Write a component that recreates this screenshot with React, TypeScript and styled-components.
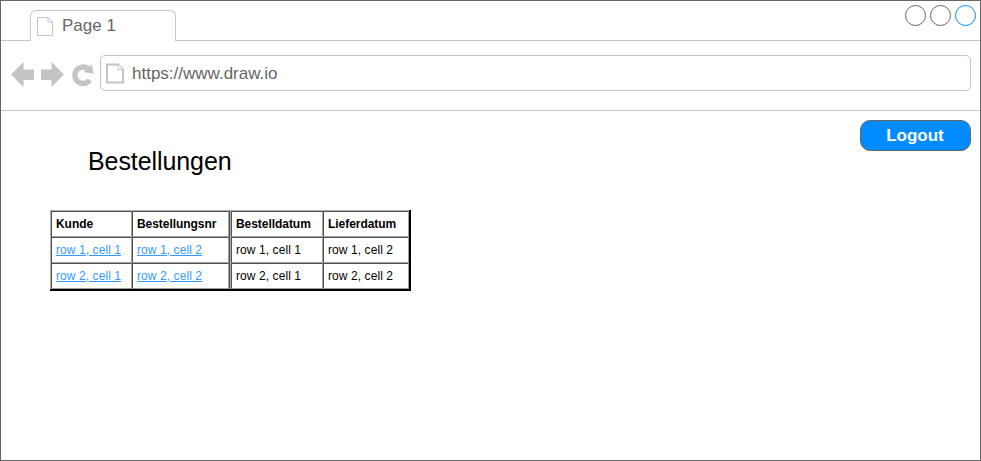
import React from "react";
import styled, { createGlobalStyle } from "styled-components";

const Global = createGlobalStyle`
  *, *::before, *::after { box-sizing: border-box; }
  body { margin: 0; background: #fff; font-family: "Liberation Sans", Arial, sans-serif; }
`;

const Window = styled.div`
  width: 981px;
  height: 461px;
  border: 1px solid #666;
  display: flex;
  flex-direction: column;
  overflow: hidden;
`;

const TabBar = styled.header`
  height: 40px;
  border-bottom: 1px solid #c4c4c4;
  display: flex;
  justify-content: space-between;
  padding: 4px 4px 0 29px;
  flex: none;
`;

const Tab = styled.div`
  width: 146px;
  height: 31px;
  margin: 5px 0 0;
  border: 1px solid #c4c4c4;
  border-bottom: none;
  border-radius: 6px 6px 0 0;
  background: #fff;
  display: flex;
  align-items: flex-start;
  padding: 6px 0 0 6px;
  gap: 6px;
  color: #666;
  font-size: 17px;
  line-height: 18px;
`;

const Circles = styled.div`
  display: flex;
  gap: 3px;
`;

const Circle = styled.svg<{ $color: string }>`
  width: 22px;
  height: 22px;
  fill: #fff;
  stroke: ${(p) => p.$color};
`;

const Toolbar = styled.div`
  height: 70px;
  border-bottom: 1px solid #c4c4c4;
  display: flex;
  align-items: flex-start;
  padding: 14px 9px 0 9px;
  flex: none;
`;

const NavIcons = styled.svg`
  width: 90px;
  height: 36px;
  flex: none;
`;

const AddressBar = styled.div`
  flex: 1;
  height: 36px;
  border: 1px solid #c4c4c4;
  border-radius: 5px;
  display: flex;
  align-items: center;
  padding-left: 5px;
  gap: 7px;
  color: #666;
  font-size: 17px;
  line-height: 20px;
`;

const Address = styled.span`
  padding-top: 2px;
`;

const FileIcon = styled.svg`
  width: 19px;
  height: 21px;
  flex: none;
  fill: #fff;
  stroke: #c4c4c4;
`;

const Content = styled.main`
  flex: 1;
  display: flex;
  justify-content: space-between;
  align-items: flex-start;
  padding: 9px 9px 0 49px;
`;

const Title = styled.h1`
  margin: 26px 0 0 38px;
  font-size: 25px;
  line-height: 30px;
  letter-spacing: -0.08px;
  font-weight: 400;
  color: #000;
`;

const Logout = styled.button`
  width: 111px;
  height: 31px;
  padding: 0 1px 0 0;
  border: 1px solid #666;
  border-radius: 10px;
  background: #008cff;
  color: #fff;
  font: bold 17px/29px "Liberation Sans", Arial, sans-serif;
`;

const Tables = styled.div`
  display: flex;
  width: 361px;
  margin-top: 34px;
  border-right: 2px solid #000;
  border-bottom: 2px solid #000;
`;

const Table = styled.table<{ $divider?: boolean }>`
  border-collapse: separate;
  border-spacing: 0;
  table-layout: fixed;
  border-top: 1px solid #b0b0b0;
  border-left: 1px solid #b0b0b0;
  border-right: ${(p) => (p.$divider ? "1px solid #505050" : "none")};
  font-size: 12px;
  line-height: 14px;
  color: #000;
`;

const Cell = styled.td<{ $width: number }>`
  width: ${(p) => p.$width}px;
  height: 26px;
  padding: 0 0 0 4px;
  border: 1px solid;
  border-color: #505050 #a0a0a0 #a0a0a0 #505050;
  text-align: left;
  white-space: nowrap;
  letter-spacing: 0.08px;
`;

const HeadCell = styled(Cell)`
  letter-spacing: -0.05px;
`;

const Link = styled.a`
  color: #3399ff;
  text-decoration: underline;
`;

type GridProps = { heads: string[]; widths: number[]; linked?: boolean };

function OrderTable({ heads, widths, linked }: GridProps) {
  return (
    <Table $divider={linked}>
      <thead>
        <tr>
          {heads.map((h, i) => (
            <HeadCell as="th" key={h} $width={widths[i]}>{h}</HeadCell>
          ))}
        </tr>
      </thead>
      <tbody>
        {[1, 2].map((r) => (
          <tr key={r}>
            {[1, 2].map((c) => {
              const text = `row ${r}, cell ${c}`;
              return (
                <Cell key={c} $width={widths[c - 1]}>
                  {linked ? <Link>{text}</Link> : text}
                </Cell>
              );
            })}
          </tr>
        ))}
      </tbody>
    </Table>
  );
}

export default function App() {
  return (
    <>
      <Global />
      <Window>
        <TabBar>
          <Tab>
            <FileIcon viewBox="0 0 19 21">
              <path d="M.5 .5H11L15.5 5V18.5H.5ZM11 .5V5H15.5" />
            </FileIcon>
            <span>Page 1</span>
          </Tab>
          <Circles>
            {["#666", "#666", "#008cff"].map((c, i) => (
              <Circle key={i} $color={c} viewBox="0 0 22 22">
                <circle cx="11.5" cy="10.5" r="10" />
              </Circle>
            ))}
          </Circles>
        </TabBar>
        <Toolbar>
          <NavIcons viewBox="10 55 90 36" fill="#c4c4c4">
            <path d="M11 74.5L23.5 62V69.5H34V80H23.5V87Z" />
            <path d="M64 74.5L51.5 62V69.5H41V80H51.5V87Z" />
            <path
              d="M88.3 68.9A8.2 8.2 0 1 0 89.8 80"
              fill="none"
              stroke="#c4c4c4"
              strokeWidth="5.4"
            />
            <path d="M91.5 64.5L93.8 73.8L83.5 72Z" />
          </NavIcons>
          <AddressBar>
            <FileIcon viewBox="0 0 19 21" strokeWidth="2">
              <path d="M1 1.5H12L17 6.5V19.5H1Z" />
              <path d="M12 1.5V6.5H17" strokeWidth="1" />
            </FileIcon>
            <Address>https://www.draw.io</Address>
          </AddressBar>
        </Toolbar>
        <Content>
          <div>
            <Title>Bestellungen</Title>
            <Tables>
              <OrderTable heads={["Kunde", "Bestellungsnr"]} widths={[81, 97]} linked />
              <OrderTable heads={["Bestelldatum", "Lieferdatum"]} widths={[92, 86]} />
            </Tables>
          </div>
          <Logout>Logout</Logout>
        </Content>
      </Window>
    </>
  );
}
